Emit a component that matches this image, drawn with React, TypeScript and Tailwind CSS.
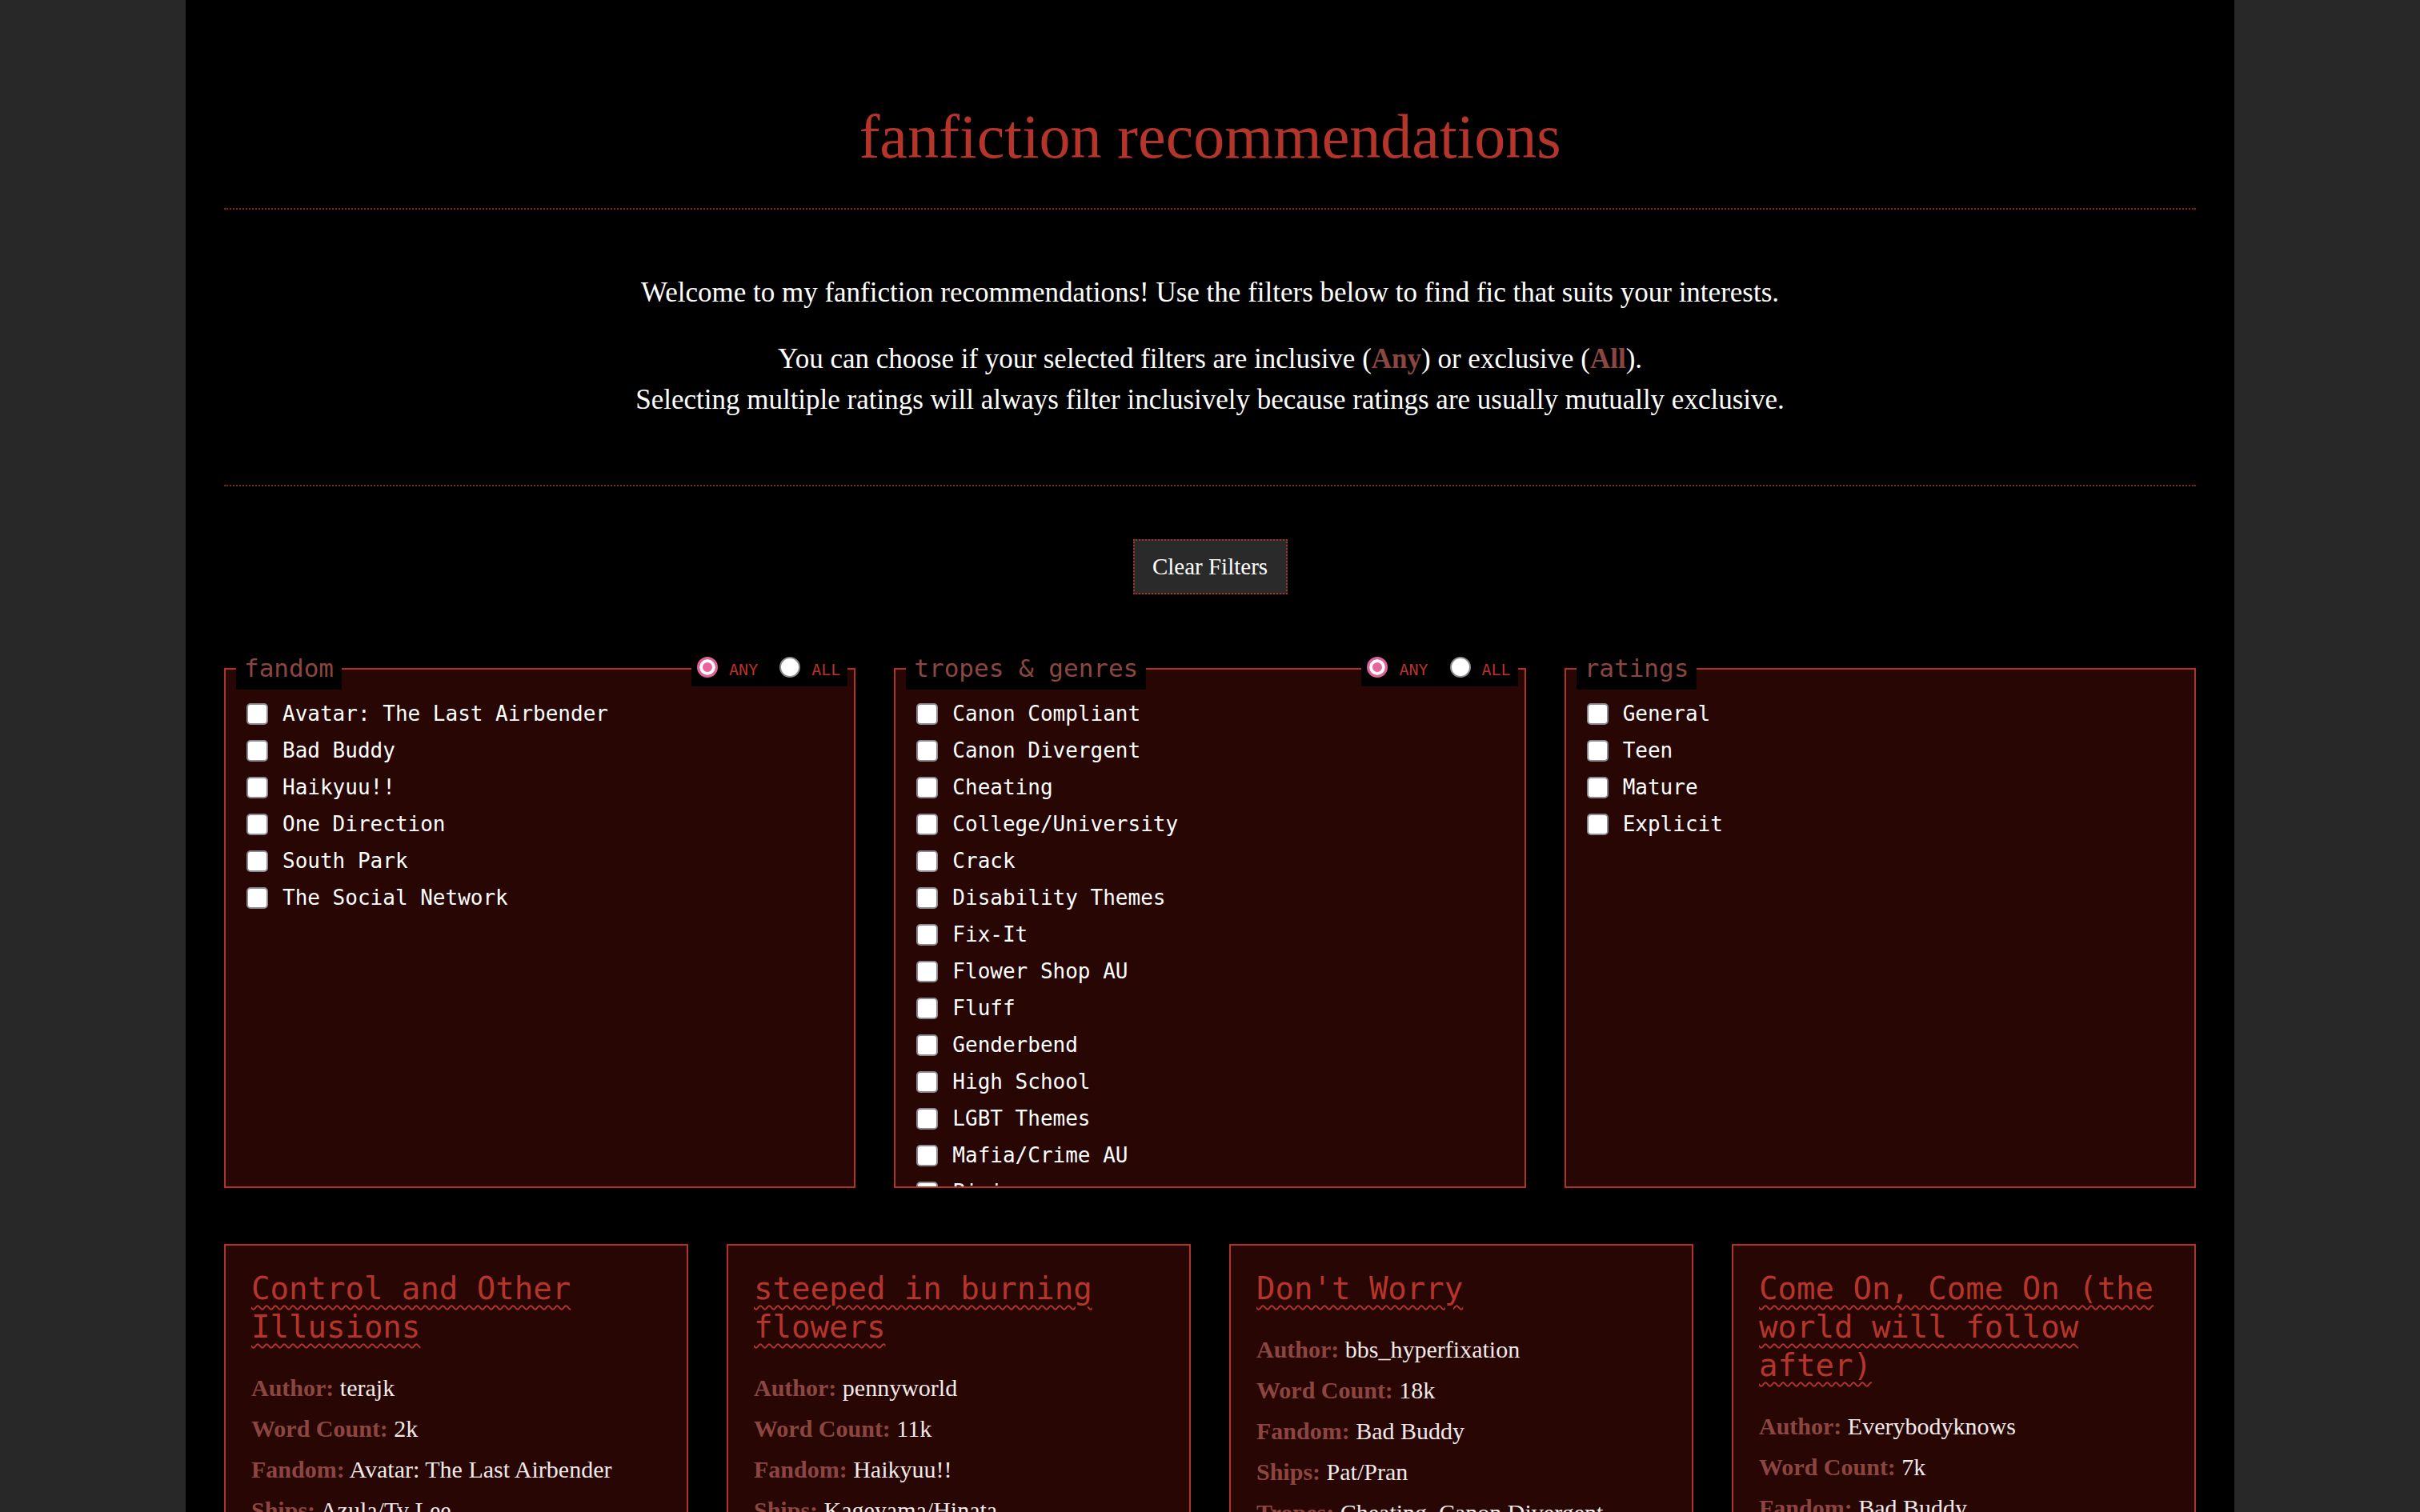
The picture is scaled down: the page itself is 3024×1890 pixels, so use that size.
import React from "react";

type Fic = {
  title: string;
  meta: { label: string; value: string }[];
};

const fandoms = [
  "Avatar: The Last Airbender",
  "Bad Buddy",
  "Haikyuu!!",
  "One Direction",
  "South Park",
  "The Social Network",
];

const tropes = [
  "Canon Compliant",
  "Canon Divergent",
  "Cheating",
  "College/University",
  "Crack",
  "Disability Themes",
  "Fix-It",
  "Flower Shop AU",
  "Fluff",
  "Genderbend",
  "High School",
  "LGBT Themes",
  "Mafia/Crime AU",
  "Pining",
];

const ratings = ["General", "Teen", "Mature", "Explicit"];

const fics: Fic[] = [
  {
    title: "Control and Other Illusions",
    meta: [
      { label: "Author:", value: "terajk" },
      { label: "Word Count:", value: "2k" },
      { label: "Fandom:", value: "Avatar: The Last Airbender" },
      { label: "Ships:", value: "Azula/Ty Lee" },
    ],
  },
  {
    title: "steeped in burning flowers",
    meta: [
      { label: "Author:", value: "pennyworld" },
      { label: "Word Count:", value: "11k" },
      { label: "Fandom:", value: "Haikyuu!!" },
      { label: "Ships:", value: "Kageyama/Hinata" },
    ],
  },
  {
    title: "Don't Worry",
    meta: [
      { label: "Author:", value: "bbs_hyperfixation" },
      { label: "Word Count:", value: "18k" },
      { label: "Fandom:", value: "Bad Buddy" },
      { label: "Ships:", value: "Pat/Pran" },
      { label: "Tropes:", value: "Cheating, Canon Divergent" },
    ],
  },
  {
    title: "Come On, Come On (the world will follow after)",
    meta: [
      { label: "Author:", value: "Everybodyknows" },
      { label: "Word Count:", value: "7k" },
      { label: "Fandom:", value: "Bad Buddy" },
    ],
  },
];

const Radio = ({ checked }: { checked?: boolean }) =>
  checked ? (
    <span className="block h-[26px] w-[26px] rounded-full border-[3px] border-[#e0609a] bg-[#e8649f] shadow-[inset_0_0_0_4px_#ffffff]" />
  ) : (
    <span className="block h-[26px] w-[26px] rounded-full border-2 border-[#8a8a90] bg-white" />
  );

const Panel = ({
  legend,
  items,
  anyAll,
}: {
  legend: string;
  items: string[];
  anyAll?: boolean;
}) => (
  <div className="relative pt-[27px]">
    <div className="h-[650px] border-2 border-[#b03228] bg-[#280603]">
      <div className="h-full overflow-hidden pl-[26px] pt-[32px]">
        {items.map((item) => (
          <label
            key={item}
            className="flex h-[46px] items-center gap-[18px] text-[26px] text-white"
          >
            <input
              type="checkbox"
              className="h-[27px] w-[27px] shrink-0 appearance-none rounded-[5px] border-2 border-[#8a8a90] bg-white"
            />
            <span>{item}</span>
          </label>
        ))}
      </div>
    </div>

    <span className="absolute left-[15px] top-0 bg-black px-[10px] text-[31px] leading-[54px] text-[#8c4642]">
      {legend}
    </span>

    {anyAll && (
      <div className="absolute right-[10px] top-[2px] flex h-[48px] items-center bg-black pl-[7px] pr-[9px] text-[20px] text-[#b8322a]">
        <Radio checked />
        <span className="ml-[14px] mt-[6px]">ANY</span>
        <span className="ml-[27px]">
          <Radio />
        </span>
        <span className="ml-[14px] mt-[6px]">ALL</span>
      </div>
    )}
  </div>
);

const Card = ({ fic }: { fic: Fic }) => (
  <div className="border-2 border-[#b03228] bg-[#280603] px-[32px] pb-10 pt-[30px]">
    <h2 className="text-[39px] font-normal leading-[48px] text-[#b5352b]">
      <a className="underline decoration-[#b5352b] decoration-wavy decoration-2 underline-offset-[7px]">
        {fic.title}
      </a>
    </h2>
    <div className="mt-[26px] font-['Liberation_Serif',serif] text-[30px] leading-[51px]">
      {fic.meta.map((m) => (
        <p key={m.label}>
          <b className="text-[#8c4642]">{m.label}</b>{" "}
          <span className="text-[#f1e9e9]">{m.value}</span>
        </p>
      ))}
    </div>
  </div>
);

export default function App() {
  return (
    <div className="min-h-screen bg-[#282828] font-['DejaVu_Sans_Mono',monospace]">
      <div className="mx-auto min-h-screen w-[2560px] bg-black px-12 pb-24 pt-[126px]">
        <h1 className="text-center font-['Liberation_Serif',serif] text-[78px] font-normal leading-[90px] text-[#b5352b]">
          fanfiction recommendations
        </h1>

        <hr className="mt-[44px] border-0 border-t-2 border-dotted border-[#7d2820]" />

        <div className="mt-[78px] text-center font-['Liberation_Serif',serif] text-[35px] leading-[51px] text-white">
          <p>
            Welcome to my fanfiction recommendations! Use the filters below to
            find fic that suits your interests.
          </p>
          <p className="mt-[32px]">
            You can choose if your selected filters are inclusive (
            <b className="text-[#8c4642]">Any</b>) or exclusive (
            <b className="text-[#8c4642]">All</b>).
            <br />
            Selecting multiple ratings will always filter inclusively because
            ratings are usually mutually exclusive.
          </p>
        </div>

        <hr className="mt-[81px] border-0 border-t-2 border-dotted border-[#7d2820]" />

        <div className="mt-[66px] flex justify-center">
          <button className="h-[69px] w-[193px] border-2 border-dotted border-[#a3322a] bg-[#2a2a2a] font-['Liberation_Serif',serif] text-[29px] text-white">
            Clear Filters
          </button>
        </div>

        <div className="mt-[65px] grid grid-cols-3 gap-12">
          <Panel legend="fandom" items={fandoms} anyAll />
          <Panel legend="tropes & genres" items={tropes} anyAll />
          <Panel legend="ratings" items={ratings} />
        </div>

        <div className="mt-[70px] grid grid-cols-4 items-start gap-12">
          {fics.map((fic) => (
            <Card key={fic.title} fic={fic} />
          ))}
        </div>
      </div>
    </div>
  );
}
